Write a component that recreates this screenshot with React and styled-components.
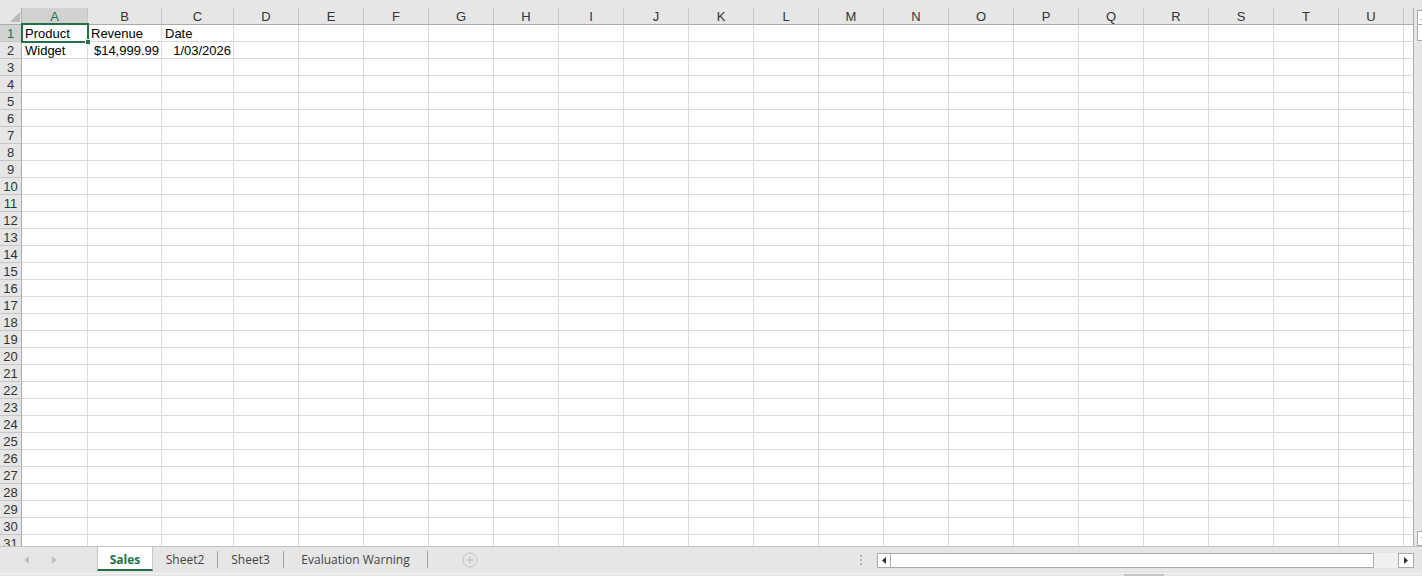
import React from 'react';
import styled, { createGlobalStyle } from 'styled-components';

const GREEN = '#217346';
const CELL_FONT = '"Liberation Sans", Arial, sans-serif';
const UI_FONT = '"Open Sans", "Noto Sans", sans-serif';

const COLS = [
    { name: 'A', width: 66 },
    { name: 'B', width: 74 },
    { name: 'C', width: 72 },
    ...'DEFGHIJKLMNOPQRSTU'.split('').map(name => ({ name, width: 65 })),
    { name: '', width: 65 },
];
const TEMPLATE = ['22px', ...COLS.map(c => `${c.width}px`)].join(' ');
const ROW_COUNT = 31;

const DATA = {
    1: { A: ['Product'], B: ['Revenue'], C: ['Date'] },
    2: { A: ['Widget'], B: ['$14,999.99', 'right'], C: ['1/03/2026', 'right'] },
};

const TABS = [
    { name: 'Sales', width: 56, active: true },
    { name: 'Sheet2', width: 64, divider: true },
    { name: 'Sheet3', width: 65, divider: true },
    { name: 'Evaluation Warning', width: 143, divider: true },
];

const App = () => {
    const rows = Array.from({ length: ROW_COUNT }, (_, i) => i + 1);
    return (
        <>
            <GlobalStyle />
            <PageStyle>
                <TopBand />
                <MainStyle>
                    <SheetStyle>
                        <GridRow>
                            <Corner>
                                <svg width="10" height="10" viewBox="0 0 10 10">
                                    <polygon points="10,0 10,10 0,10" fill="#b9b9b9" />
                                </svg>
                            </Corner>
                            {COLS.map((c, i) => (
                                <ColHeader key={i} $active={c.name === 'A'}>{c.name}</ColHeader>
                            ))}
                        </GridRow>
                        <BodyStyle>
                            {rows.map(r => (
                                <GridRow key={r}>
                                    <RowHeader $active={r === 1}>{r}</RowHeader>
                                    {COLS.map((c, i) => {
                                        const cell = DATA[r] && DATA[r][c.name];
                                        return (
                                            <Cell key={i} $align={cell && cell[1] ? cell[1] : 'left'}>
                                                {cell ? cell[0] : ''}
                                            </Cell>
                                        );
                                    })}
                                </GridRow>
                            ))}
                        </BodyStyle>
                        <Selection>
                            <FillHandle />
                        </Selection>
                    </SheetStyle>
                    <VScroll>
                        <VButton>
                            <svg width="7" height="4" viewBox="0 0 7 4"><polygon points="3.5,0 7,4 0,4" fill="#444" /></svg>
                        </VButton>
                        <VThumb />
                        <Spacer />
                        <VButton>
                            <svg width="7" height="4" viewBox="0 0 7 4"><polygon points="0,0 7,0 3.5,4" fill="#444" /></svg>
                        </VButton>
                    </VScroll>
                </MainStyle>
                <BottomBar>
                    <TabRow>
                        <NavArea>
                            <svg width="5" height="8" viewBox="0 0 5 8"><polygon points="5,0 5,8 0,4" fill="#c2c2c2" /></svg>
                            <svg width="5" height="8" viewBox="0 0 5 8"><polygon points="0,0 5,4 0,8" fill="#c2c2c2" /></svg>
                        </NavArea>
                        {TABS.map(t => (
                            <React.Fragment key={t.name}>
                                <Tab $width={t.width} $active={t.active}>{t.name}</Tab>
                                {t.divider && <TabDivider />}
                            </React.Fragment>
                        ))}
                        <AddButton>
                            <svg width="16" height="16" viewBox="0 0 16 16">
                                <circle cx="8" cy="8" r="7" fill="none" stroke="#c4c4c4" strokeWidth="1" />
                                <path d="M8 4.5v7M4.5 8h7" stroke="#c4c4c4" strokeWidth="1.4" />
                            </svg>
                        </AddButton>
                        <Spacer />
                        <SplitDots>
                            <span /><span /><span />
                        </SplitDots>
                        <HScroll>
                            <HButton $width={14}>
                                <svg width="4" height="7" viewBox="0 0 4 7"><polygon points="4,0 4,7 0,3.5" fill="#333" /></svg>
                            </HButton>
                            <HThumb />
                            <HTrack />
                            <HButton $width={16}>
                                <svg width="4" height="7" viewBox="0 0 4 7"><polygon points="0,0 4,3.5 0,7" fill="#333" /></svg>
                            </HButton>
                        </HScroll>
                    </TabRow>
                    <Footer>
                        <Grip />
                    </Footer>
                </BottomBar>
            </PageStyle>
        </>
    );
};

//Styled Components
const GlobalStyle = createGlobalStyle`
    html, body {
        margin: 0;
        padding: 0;
        overflow: hidden;
        background: #e6e6e6;
    }
`;

const PageStyle = styled.div`
    width: 1422px;
    height: 576px;
    overflow: hidden;
    display: flex;
    flex-direction: column;
    background: #e6e6e6;
    font-family: ${CELL_FONT};
`;

const TopBand = styled.div`
    height: 8px;
    flex-shrink: 0;
`;

const MainStyle = styled.div`
    display: flex;
    height: 538px;
    flex-shrink: 0;
`;

const SheetStyle = styled.div`
    position: relative;
    flex: 0 0 1414px;
    box-sizing: border-box;
    border-right: 1px solid #ababab;
    overflow: hidden;
    background: #fff;
`;

const GridRow = styled.div`
    display: grid;
    grid-template-columns: ${TEMPLATE};
    grid-template-rows: 17px;
    height: 17px;
`;

const Corner = styled.div`
    box-sizing: border-box;
    background: #e6e6e6;
    border-right: 1px solid #ababab;
    border-bottom: 1px solid #ababab;
    display: flex;
    align-items: flex-end;
    justify-content: flex-end;
    padding: 0 1px 2px 0;
`;

const ColHeader = styled.div`
    box-sizing: border-box;
    background: ${p => (p.$active ? '#d2d2d2' : '#e6e6e6')};
    border-right: 1px solid #c6c6c6;
    border-bottom: 1px solid ${p => (p.$active ? GREEN : '#ababab')};
    color: ${p => (p.$active ? GREEN : '#333')};
    font: 13px/16px ${CELL_FONT};
    padding-top: 1px;
    text-align: center;
`;

const BodyStyle = styled.div`
    height: 521px;
    overflow: hidden;
`;

const RowHeader = styled.div`
    box-sizing: border-box;
    background: ${p => (p.$active ? '#d2d2d2' : '#e6e6e6')};
    border-right: 1px solid ${p => (p.$active ? GREEN : '#ababab')};
    border-bottom: 1px solid #c6c6c6;
    color: ${p => (p.$active ? GREEN : '#333')};
    font: 13px/16px ${CELL_FONT};
    padding-top: 1px;
    text-align: center;
`;

const Cell = styled.div`
    box-sizing: border-box;
    border-right: 1px solid #dadada;
    border-bottom: 1px solid #dadada;
    padding: 1px ${p => (p.$align === 'right' ? '2px' : '3px')} 0;
    text-align: ${p => p.$align};
    font: 13px/16px ${CELL_FONT};
    color: #000;
    white-space: nowrap;
`;

const Selection = styled.div`
    position: absolute;
    left: 21px;
    top: 15px;
    width: 68px;
    height: 20px;
    box-sizing: border-box;
    border: 2px solid ${GREEN};
    pointer-events: none;
`;

const FillHandle = styled.div`
    position: absolute;
    right: -4px;
    bottom: -4px;
    width: 6px;
    height: 6px;
    box-sizing: border-box;
    background: ${GREEN};
    border: 1px solid #fff;
`;

const VScroll = styled.div`
    flex: 0 0 8px;
    display: flex;
    flex-direction: column;
    padding: 2px 0 0 3px;
    background: #e6e6e6;
`;

const VButton = styled.div`
    flex-shrink: 0;
    width: 15px;
    height: 15px;
    box-sizing: border-box;
    border: 1px solid #ababab;
    background: #fff;
    display: flex;
    align-items: center;
    justify-content: center;
`;

const VThumb = styled.div`
    flex-shrink: 0;
    width: 15px;
    height: 17px;
    margin-top: -1px;
    box-sizing: border-box;
    border: 1px solid #ababab;
    background: #fff;
`;

const Spacer = styled.div`
    flex: 1;
`;

const BottomBar = styled.div`
    flex-shrink: 0;
    height: 30px;
    box-sizing: border-box;
    border-top: 1px solid #c2c2c2;
    display: flex;
    flex-direction: column;
    background: #e6e6e6;
`;

const TabRow = styled.div`
    display: flex;
    align-items: flex-start;
    height: 26px;
`;

const NavArea = styled.div`
    flex: 0 0 97px;
    box-sizing: border-box;
    height: 24px;
    display: flex;
    align-items: center;
    gap: 23px;
    padding: 1px 0 0 24px;
`;

const Tab = styled.div`
    flex: 0 0 ${p => p.$width}px;
    box-sizing: border-box;
    height: 24px;
    display: flex;
    align-items: center;
    justify-content: center;
    padding-top: 3px;
    font: ${p => (p.$active ? 700 : 400)} 12px ${UI_FONT};
    color: ${p => (p.$active ? GREEN : '#444')};
    background: ${p => (p.$active ? '#fff' : 'transparent')};
    border-left: 1px solid ${p => (p.$active ? '#c6c6c6' : 'transparent')};
    border-right: 1px solid ${p => (p.$active ? '#c6c6c6' : 'transparent')};
    border-bottom: 2px solid ${p => (p.$active ? GREEN : 'transparent')};
    white-space: nowrap;
`;

const TabDivider = styled.div`
    flex: 0 0 1px;
    height: 17px;
    margin-top: 4px;
    background: #9f9f9f;
`;

const AddButton = styled.div`
    align-self: center;
    display: flex;
    margin-left: 34px;
`;

const SplitDots = styled.div`
    align-self: center;
    display: flex;
    flex-direction: column;
    gap: 2px;
    margin-right: 15px;
    span {
        width: 2px;
        height: 2px;
        background: #b4b4b4;
    }
`;

const HScroll = styled.div`
    display: flex;
    width: 537px;
    height: 15px;
    margin: 6px 8px 0 0;
`;

const HButton = styled.div`
    flex: 0 0 ${p => p.$width}px;
    box-sizing: border-box;
    border: 1px solid #ababab;
    background: #fff;
    display: flex;
    align-items: center;
    justify-content: center;
`;

const HThumb = styled.div`
    flex: 0 0 484px;
    margin-left: -1px;
    box-sizing: border-box;
    border: 1px solid #ababab;
    background: #fff;
`;

const HTrack = styled.div`
    flex: 0 0 24px;
    background: #f0f0f0;
`;

const Footer = styled.div`
    flex: 1;
    box-sizing: border-box;
    border-top: 1px solid #f4f4f4;
    display: flex;
    align-items: flex-end;
    padding-left: 1124px;
`;

const Grip = styled.div`
    width: 40px;
    height: 2px;
    background: #c6c6c6;
`;

export default App;
